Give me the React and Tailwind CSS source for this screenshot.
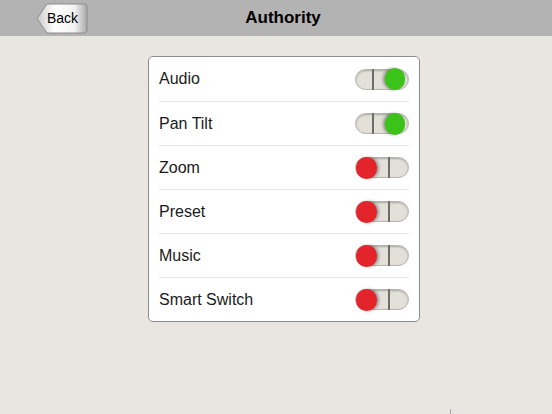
import React from "react";

const items = [
  { name: "Audio", on: true },
  { name: "Pan Tilt", on: true },
  { name: "Zoom", on: false },
  { name: "Preset", on: false },
  { name: "Music", on: false },
  { name: "Smart Switch", on: false },
];

const Toggle = ({ on }) =>
  on ? (
    <div className="flex h-[21px] w-[54px] items-center rounded-full border border-[#b9b6b0] bg-[#e3e0da] pl-[16px] pr-[3px] shadow-[inset_0_1px_2px_rgba(0,0,0,0.25)]">
      <div className="h-[21px] w-[2px] bg-[#6f6d69]" />
      <div className="flex-1" />
      <div className="h-[22px] w-[20px] shrink-0 rounded-full bg-[#3cc31a] shadow-[-2px_0_3px_rgba(0,0,0,0.35)]" />
    </div>
  ) : (
    <div className="flex h-[21px] w-[54px] items-center gap-[11px] rounded-full border border-[#b9b6b0] bg-[#e3e0da] pl-0 shadow-[inset_0_1px_2px_rgba(0,0,0,0.25)]">
      <div className="h-[22px] w-[21px] shrink-0 rounded-full bg-[#e3242b] shadow-[2px_0_3px_rgba(0,0,0,0.35)]" />
      <div className="h-[21px] w-[2px] bg-[#6f6d69]" />
    </div>
  );

const BackButton = () => (
  <div className="relative ml-[36px] flex h-[31px] w-[52px] items-center pl-[11px]">
    <svg className="absolute inset-0" width="52" height="31" viewBox="0 0 52 31">
      <defs>
        <linearGradient id="bk" x1="0" y1="0" x2="1" y2="0">
          <stop offset="0" stopColor="#c9c9c9" />
          <stop offset="0.35" stopColor="#ffffff" />
          <stop offset="0.75" stopColor="#f2f2f2" />
          <stop offset="1" stopColor="#a9a9a9" />
        </linearGradient>
      </defs>
      <path
        d="M1 15.5 L11 1 H48 Q51 1 51 4 V27 Q51 30 48 30 H11 Z"
        fill="url(#bk)"
        stroke="#8c8c8c"
        strokeWidth="1"
      />
    </svg>
    <span className="relative text-[14px] leading-[17px] text-black">Back</span>
  </div>
);

export default function App() {
  return (
    <div className="relative h-[414px] w-[552px] overflow-hidden bg-[#e9e6e1] font-['Liberation_Sans',Arial,sans-serif]">
      <div className="grid h-[36px] grid-cols-[1fr_auto_1fr] items-center bg-[#b3b3b3]">
        <BackButton />
        <div className="pl-[14px] text-[17px] font-bold text-black">Authority</div>
        <div />
      </div>
      <div className="ml-[148px] mt-[20px] w-[272px] rounded-[5px] border border-[#8d8d8d] bg-white">
        {items.map((it, i) => (
          <div
            key={it.name}
            className={
              i === 0
                ? "mx-[10px] flex h-[44px] items-center justify-between"
                : "mx-[10px] flex h-[44px] items-center justify-between border-t border-[#e6e6e6]"
            }
          >
            <span className="text-[16px] text-[#1a1a1a]">{it.name}</span>
            <Toggle on={it.on} />
          </div>
        ))}
      </div>
      <div className="absolute left-[450px] top-[409px] h-[5px] w-px bg-[#a8a8a8]" />
    </div>
  );
}
